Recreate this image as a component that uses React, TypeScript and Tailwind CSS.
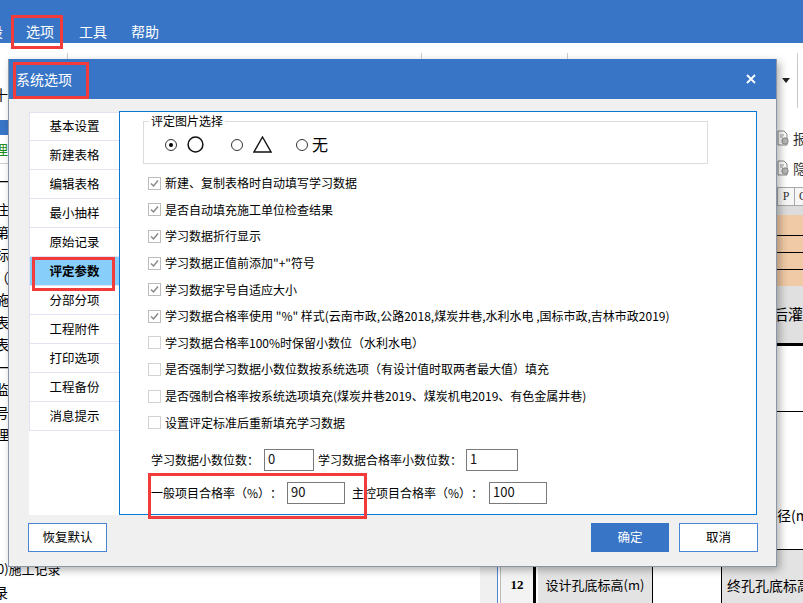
const navItems = [
  '基本设置',
  '新建表格',
  '编辑表格',
  '最小抽样',
  '原始记录',
  '评定参数',
  '分部分项',
  '工程附件',
  '打印选项',
  '工程备份',
  '消息提示',
];

const checks = [
  { label: '新建、复制表格时自动填写学习数据', checked: true },
  { label: '是否自动填充施工单位检查结果', checked: true },
  { label: '学习数据折行显示', checked: true },
  { label: '学习数据正值前添加"+"符号', checked: true },
  { label: '学习数据字号自适应大小', checked: true },
  {
    label: '学习数据合格率使用 "%" 样式(云南市政,公路2018,煤炭井巷,水利水电 ,国标市政,吉林市政2019)',
    checked: true,
  },
  { label: '学习数据合格率100%时保留小数位（水利水电）', checked: false },
  { label: '是否强制学习数据小数位数按系统选项（有设计值时取两者最大值）填充', checked: false },
  { label: '是否强制合格率按系统选项填充(煤炭井巷2019、煤炭机电2019、有色金属井巷)', checked: false },
  { label: '设置评定标准后重新填充学习数据', checked: false },
];

const treeRows = ['注', '第', '标', '（', '施', '表', '表', '一', '监', '号', '理', '', '', '', '', ''];

function Radio({ on }: { on?: boolean }) {
  return (
    <span className="flex h-[12px] w-[12px] items-center justify-center rounded-full border border-[#333] bg-white">
      {on && <span className="h-[4px] w-[4px] rounded-full bg-black" />}
    </span>
  );
}

function Check({ checked }: { checked: boolean }) {
  return (
    <span
      className={
        checked
          ? 'flex h-[13px] w-[13px] shrink-0 items-center justify-center border border-[#bcbcbc] bg-white'
          : 'flex h-[13px] w-[13px] shrink-0 items-center justify-center border border-[#d2d2d2] bg-white'
      }
    >
      {checked && (
        <svg width="11" height="11" viewBox="0 0 11 11">
          <polyline points="2,5.5 4.5,8 9,2.5" fill="none" stroke="#8a8a8a" strokeWidth="1.5" />
        </svg>
      )}
    </span>
  );
}

function Field({ value, w }: { value: string; w: string }) {
  return (
    <div className={`h-[22px] ${w} border border-[#7a7a7a] bg-white pl-[3px] text-[13px] leading-[18px] text-[#111]`}>
      {value}
    </div>
  );
}

function DocIcon() {
  return (
    <svg width="12" height="16" viewBox="0 0 12 16" className="shrink-0">
      <path d="M1 1h6l3 3v11H1z" fill="#fff" stroke="#8a8a8a" strokeWidth="1" />
      <path d="M3 5h4M3 7h3" stroke="#9a9a9a" strokeWidth="1" />
      <circle cx="8" cy="11" r="3.2" fill="#b5b5b5" stroke="#7a7a7a" strokeWidth="0.8" />
    </svg>
  );
}

export default function App() {
  return (
    <div className="relative h-[603px] w-[803px] overflow-hidden bg-white font-['Noto_Sans_CJK_SC','Noto_Sans',sans-serif] text-black [text-spacing-trim:space-all]">
      {/* menu bar */}
      <div className="flex h-[43px] items-start bg-[#3875c6] pt-[21px] text-[14px] leading-[20px] text-white">
        <span className="-ml-[11px]">设</span>
        <span className="ml-[23px]">选项</span>
        <span className="ml-[25px]">工具</span>
        <span className="ml-[24px]">帮助</span>
      </div>

      {/* toolbar strip */}
      <div className="flex h-[16px]">
        <div className="w-[67px]" />
        <div className="mt-[10px] w-[354px] border-l border-[#cfcfcf]" />
        <div className="mt-[10px] w-[146px] border-l border-[#cfcfcf]" />
        <div className="mt-[10px] w-[230px] border-l border-[#cfcfcf]" />
        <div className="mt-[10px] flex-1 border-l border-[#cfcfcf]" />
      </div>

      {/* main app area behind the dialog */}
      <div className="flex h-[544px] overflow-hidden">
        <div className="w-[480px] shrink-0 overflow-hidden text-[14px] leading-[20px]">
          <div className="h-[61px] pt-[25px]">
            <span className="-ml-[6px] block">十</span>
          </div>
          <div className="h-[15px] bg-[#3875c6]" />
          <div className="flex h-[29px] items-center border-b border-[#cfcfcf] text-[#1f8f1f]">
            <span className="-ml-[6px] whitespace-nowrap">理</span>
          </div>
          <div className="flex h-[34px] items-center">
            <span className="-ml-[5px]">一</span>
          </div>
          {treeRows.map((t, i) => (
            <div key={i} className="flex h-[22.5px] items-center">
              <span className="-ml-[5px] whitespace-nowrap">{t}</span>
            </div>
          ))}
          <div className="flex h-[22.5px] items-center text-[13px]">
            <span className="-ml-[3px] whitespace-nowrap">0)施工记录</span>
          </div>
          <div className="flex h-[22.5px] items-center">
            <span className="-ml-[6px]">录</span>
          </div>
        </div>

        <div className="flex w-[323px] shrink-0">
          <div className="w-[17px] shrink-0 bg-[#f0f0f0]" />
          <div className="w-px shrink-0 bg-[#4f86d6]" />
          <div className="w-[305px] shrink-0 overflow-hidden">
            <div className="flex h-[59px] items-start pl-[284px]">
              <svg width="8" height="5" viewBox="0 0 8 5" className="mt-[19px] shrink-0">
                <polygon points="0,0 8,0 4,5" fill="#222" />
              </svg>
              <div className="ml-[7px] h-[49px] w-px shrink-0 bg-[#c8c8c8]" />
            </div>
            <div className="h-[69px] pt-[5px] text-[14px] text-[#333]">
              <div className="flex h-[30px] items-center gap-[4px] overflow-hidden pl-[279px]">
                <DocIcon />
                <span className="whitespace-nowrap">报表</span>
              </div>
              <div className="flex h-[30px] items-center gap-[4px] overflow-hidden pl-[279px]">
                <DocIcon />
                <span className="whitespace-nowrap">隐藏</span>
              </div>
            </div>
            <div className="flex h-[19px] border-y border-[#a8a8a8] bg-[#f6f6f6] font-['Liberation_Serif',serif] text-[12px] leading-[17px] text-[#333]">
              <div className="w-[279px] shrink-0" />
              <div className="w-[17px] shrink-0 border-l border-[#a8a8a8] text-center">P</div>
              <div className="flex-1 border-l border-[#a8a8a8] pl-[4px]">Q</div>
            </div>
            <div className="h-[9px] bg-[#dcdcdc]" />
            <div className="h-[20px] bg-[#f0caa6]" />
            <div className="h-[17px] border-t border-black bg-[#f0caa6]" />
            <div className="h-[17px] border-t border-black bg-[#f0caa6]" />
            <div className="h-[17px] border-t border-black bg-[#f0caa6]" />
            <div className="flex h-[57px] items-center overflow-hidden bg-[#e0e0e0] pl-[275px] text-[15px]">
              <span className="whitespace-nowrap">后灌浆</span>
            </div>
            <div className="h-[3px] bg-black" />
            <div className="h-[66px] border-b border-black" />
            <div className="h-[69px]" />
            <div className="flex h-[69px] items-center overflow-hidden border-b border-black pl-[265px] text-[14px]">
              <span className="whitespace-nowrap">孔径(m)</span>
            </div>
            <div className="flex h-[70px] text-[13px]">
              <div className="w-[2px] shrink-0" />
              <div className="flex w-[33px] shrink-0 items-center justify-center border-l border-[#bbb] bg-[#f3f3f3] font-['Liberation_Serif',serif] text-[13px] font-bold">
                12
              </div>
              <div className="w-[3px] shrink-0 bg-black" />
              <div className="w-[2px] shrink-0" />
              <div className="flex w-[114px] shrink-0 items-center justify-center whitespace-nowrap bg-[#e3e3e3]">
                设计孔底标高(m)
              </div>
              <div className="w-px shrink-0 bg-black" />
              <div className="w-[68px] shrink-0" />
              <div className="w-px shrink-0 bg-black" />
              <div className="flex flex-1 items-center overflow-hidden whitespace-nowrap bg-[#e3e3e3] pl-[5px] text-[14px]">
                终孔孔底标高
              </div>
            </div>
          </div>
        </div>
      </div>

      {/* dialog window */}
      <div className="absolute left-[8px] top-[59px] flex h-[508px] w-[769px] flex-col border-x border-b border-[#8a96a6] bg-[#f0f0f0] shadow-[3px_3px_8px_rgba(0,0,0,0.3)]">
        <div className="flex h-[40px] shrink-0 items-center justify-between bg-[#3875c6] pl-[7px] pr-[20px] text-white">
          <span className="text-[14px] leading-[20px]">系统选项</span>
          <svg width="10" height="10" viewBox="0 0 10 10">
            <path d="M1 1L9 9M9 1L1 9" stroke="#fff" strokeWidth="1.8" />
          </svg>
        </div>

        <div className="flex flex-1 flex-col">
          <div className="flex items-start pl-[20px] pt-[12px]">
            <div className="mt-[1px] h-[403px] w-[90px] bg-white">
              {navItems.map((n, i) => (
                <div
                  key={n}
                  className={
                    i === 5
                      ? 'flex h-[29px] items-center justify-center border-b border-l border-[#e2e2f4] bg-[#87cefa] text-[12.5px] font-bold'
                      : i === 0
                        ? 'flex h-[29px] items-center justify-center border border-r-0 border-[#e2e2f4] text-[12.5px]'
                        : 'flex h-[29px] items-center justify-center border-b border-l border-[#e2e2f4] text-[12.5px]'
                  }
                >
                  {n}
                </div>
              ))}
            </div>

            <div className="flex h-[404px] w-[638px] flex-col border border-[#0a78d6] bg-white text-[12px]">
              <fieldset className="ml-[23px] mt-[1px] w-[565px] border border-[#dcdcdc] pb-[10px]">
                <legend className="ml-[5px] px-[2px] text-[12px] leading-[16px]">评定图片选择</legend>
                <div className="mt-[7px] flex h-[17px] items-center pl-[21px]">
                  <Radio on />
                  <svg width="17" height="17" viewBox="0 0 17 17" className="ml-[10px]">
                    <circle cx="8.5" cy="8.5" r="7.4" fill="none" stroke="#111" strokeWidth="1.5" />
                  </svg>
                  <span className="ml-[27px]">
                    <Radio />
                  </span>
                  <svg width="19" height="17" viewBox="0 0 19 17" className="ml-[10px]">
                    <polygon points="9.5,1 18,16 1,16" fill="none" stroke="#111" strokeWidth="1.4" />
                  </svg>
                  <span className="ml-[24px]">
                    <Radio />
                  </span>
                  <span className="ml-[4px] text-[16px] leading-[17px]">无</span>
                </div>
              </fieldset>

              <div className="ml-[28px] mt-[6px] flex flex-col">
                {checks.map((c) => (
                  <div key={c.label} className="flex h-[26.6px] items-center">
                    <Check checked={c.checked} />
                    <span className="ml-[4px] whitespace-nowrap leading-[16px]">{c.label}</span>
                  </div>
                ))}
              </div>

              <div className="ml-[31px] mt-[13px] flex h-[22px] items-center">
                <span className="w-[113px] whitespace-nowrap">学习数据小数位数：</span>
                <Field value="0" w="w-[50px]" />
                <span className="ml-[4px] w-[148px] whitespace-nowrap">学习数据合格率小数位数：</span>
                <Field value="1" w="w-[52px]" />
              </div>
              <div className="ml-[31px] mt-[11px] flex h-[22px] items-center">
                <span className="w-[136px] whitespace-nowrap">一般项目合格率（%）：</span>
                <Field value="90" w="w-[58px]" />
                <span className="ml-[7px] w-[137px] whitespace-nowrap">主控项目合格率（%）：</span>
                <Field value="100" w="w-[58px]" />
              </div>
            </div>
          </div>

          <div className="mt-[8px] flex h-[29px] pr-[18px] text-[12.5px]">
            <button className="ml-[19px] h-[29px] w-[79px] border-[1.5px] border-[#4a84d4] bg-white">恢复默认</button>
            <div className="flex-1" />
            <button className="h-[29px] w-[78px] bg-[#3875c6] text-white">确定</button>
            <button className="ml-[10px] h-[29px] w-[79px] border-[1.5px] border-[#4a84d4] bg-white">取消</button>
          </div>
        </div>
      </div>

      {/* red annotation boxes */}
      <div className="absolute left-[11px] top-[15px] h-[34px] w-[52px] border-[3px] border-[#f23c3c]" />
      <div className="absolute left-[13px] top-[62px] h-[37px] w-[76px] border-[3px] border-[#f23c3c]" />
      <div className="absolute left-[32px] top-[257px] h-[34px] w-[83px] border-[3px] border-[#f23c3c]" />
      <div className="absolute left-[148px] top-[473px] h-[46px] w-[219px] border-[3px] border-[#f23c3c]" />
    </div>
  );
}
